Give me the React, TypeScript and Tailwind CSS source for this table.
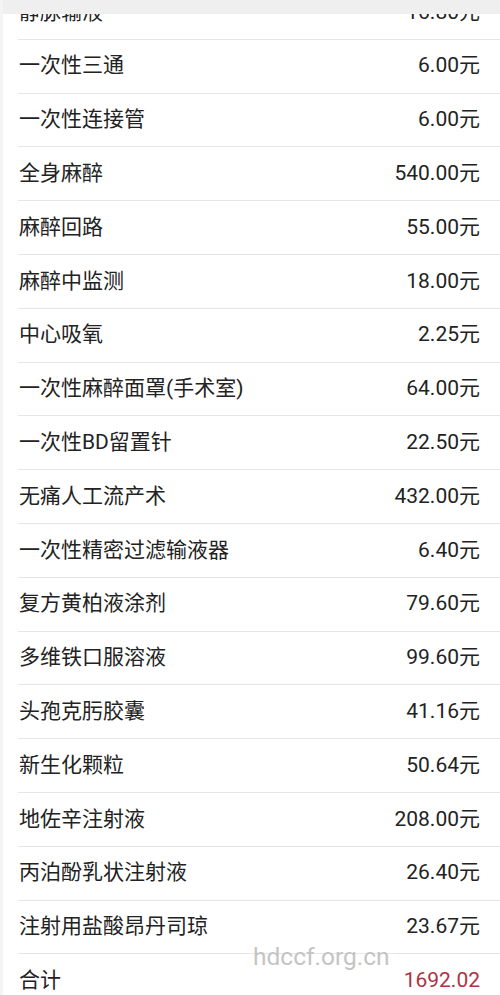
const items: [string, string][] = [
  ["静脉输液", "16.80元"],
  ["一次性三通", "6.00元"],
  ["一次性连接管", "6.00元"],
  ["全身麻醉", "540.00元"],
  ["麻醉回路", "55.00元"],
  ["麻醉中监测", "18.00元"],
  ["中心吸氧", "2.25元"],
  ["一次性麻醉面罩(手术室)", "64.00元"],
  ["一次性BD留置针", "22.50元"],
  ["无痛人工流产术", "432.00元"],
  ["一次性精密过滤输液器", "6.40元"],
  ["复方黄柏液涂剂", "79.60元"],
  ["多维铁口服溶液", "99.60元"],
  ["头孢克肟胶囊", "41.16元"],
  ["新生化颗粒", "50.64元"],
  ["地佐辛注射液", "208.00元"],
  ["丙泊酚乳状注射液", "26.40元"],
  ["注射用盐酸昂丹司琼", "23.67元"],
];

export default function App() {
  return (
    <div
      className="relative w-[500px] h-[995px] overflow-hidden bg-white text-[#222] border-l-[3px] border-[#f4f4f4]"
      style={{ fontFamily: "Roboto, 'Noto Sans CJK SC', sans-serif" }}
    >
      {/* top bar over the list */}
      <div className="absolute top-0 left-0 right-0 h-[14px] bg-[#efefef] z-10" />

      <div className="-mt-[14px] ml-[15px]">
        {items.map(([name, price]) => (
          <div
            key={name}
            className="flex items-center justify-between h-[53.8px] border-b border-[#e6e6e6] pl-[1px] pr-[20px] text-[21px]"
          >
            <span>{name}</span>
            <span>{price}</span>
          </div>
        ))}
        <div className="flex items-center justify-between h-[53.8px] pl-[1px] pr-[20px] text-[21px]">
          <span>合计</span>
          <span className="text-[#ad3344]">1692.02</span>
        </div>
      </div>

      {/* watermark */}
      <div className="absolute left-[250px] top-[945px] text-[24.5px] text-[#c4c4c4] leading-none">
        hdccf.org.cn
      </div>
    </div>
  );
}
